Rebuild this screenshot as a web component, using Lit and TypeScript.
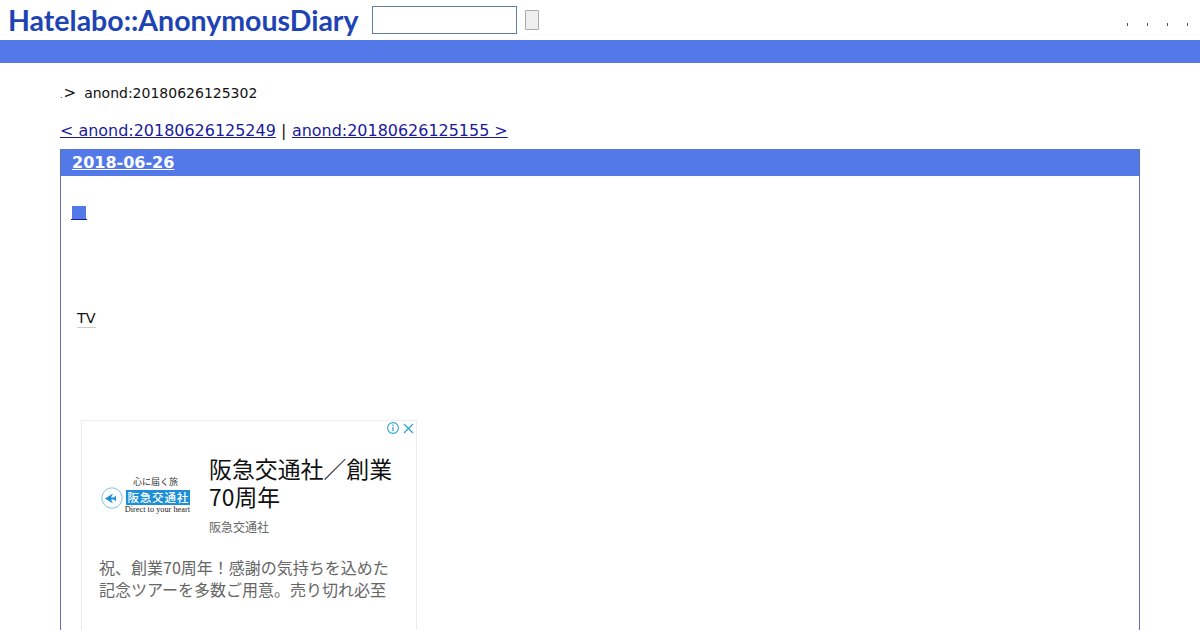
import { LitElement, css, html } from "lit";
import { customElement } from "lit/decorators.js";

@customElement("ad-card")
class AdCard extends LitElement {
  static styles = css`
    :host {
      display: block;
      position: relative;
      box-sizing: border-box;
      width: 336px;
      height: 280px;
      border: 1px solid #ececec;
      font-family: "Noto Sans CJK JP", "Liberation Sans", sans-serif;
    }
    .choices {
      position: absolute;
      top: 0;
      right: 1px;
      display: flex;
      align-items: center;
      gap: 2px;
    }
    .main {
      display: flex;
      align-items: flex-start;
      gap: 19px;
      padding: 33px 0 0 18px;
    }
    .logo {
      width: 90px;
      display: flex;
      flex-direction: column;
      align-items: flex-end;
      flex: none;
      margin-top: 23px;
    }
    .tag {
      font-size: 9px;
      line-height: 10px;
      color: #333;
      padding-right: 12px;
    }
    .mid {
      display: flex;
      align-items: center;
      gap: 3px;
      margin-top: 3px;
    }
    .mid svg {
      margin: -4px 0;
    }
    .brand {
      background: #1c8fd6;
      color: #fff;
      font-size: 11.5px;
      line-height: 15px;
      font-weight: 500;
      letter-spacing: 0.8px;
      padding: 0 1px 0 2px;
      white-space: nowrap;
    }
    .sub {
      font-family: "Liberation Serif", serif;
      font-size: 8.3px;
      line-height: 9px;
      color: #222;
      white-space: nowrap;
    }
    h2 {
      margin: 0;
      font-size: 22.9px;
      line-height: 28px;
      font-weight: 400;
      color: #111;
      width: 190px;
    }
    .who {
      font-size: 12px;
      line-height: 16px;
      color: #666;
      margin-top: 9px;
    }
    p {
      margin: 21px 0 0 17px;
      width: 295px;
      font-size: 16px;
      line-height: 22px;
      color: #666;
    }
  `;
  render() {
    return html`
      <div class="choices">
        <svg width="14" height="14" viewBox="0 0 14 14" fill="none" stroke="#2ba6cb">
          <circle cx="7" cy="7" r="5.4" stroke-width="1.1" />
          <path d="M7 6v4.2M7 3.6v1.4" stroke-width="1.3" />
        </svg>
        <svg width="13" height="13" viewBox="0 0 13 13" fill="none" stroke="#2ba6cb" stroke-width="1.2">
          <path d="M2 2l9 9M11 2l-9 9" />
        </svg>
      </div>
      <div class="main">
        <div class="logo">
          <div class="tag">心に届く旅</div>
          <div class="mid">
            <svg width="22" height="22" viewBox="0 0 22 22" fill="none" stroke="#4aa9de">
              <circle cx="11" cy="11" r="10.2" stroke-width="0.7" />
              <path d="M4 11.5l8-5-2 4h3l2-2v6l-2-2h-3l2 4z" fill="#1c8fd6" stroke="none" />
            </svg>
            <div class="brand">阪急交通社</div>
          </div>
          <div class="sub">Direct to your heart</div>
        </div>
        <div>
          <h2>阪急交通社／創業70周年</h2>
          <div class="who">阪急交通社</div>
        </div>
      </div>
      <p>祝、創業70周年！感謝の気持ちを込めた記念ツアーを多数ご用意。売り切れ必至</p>
    `;
  }
}

@customElement("app-root")
export class AppRoot extends LitElement {
  static styles = css`
    :host {
      display: block;
      height: 630px;
      overflow: hidden;
      font-family: "DejaVu Sans", sans-serif;
      color: #111;
    }
    header {
      display: flex;
      align-items: center;
      height: 40px;
      padding-left: 8px;
    }
    .logo {
      font-family: Lato, "Liberation Sans", sans-serif;
      font-weight: 700;
      font-size: 28.5px;
      line-height: 40px;
      color: #1e44b4;
      width: 364px;
      white-space: nowrap;
    }
    .search {
      box-sizing: border-box;
      width: 145px;
      height: 28px;
      border: 1px solid #5f7fa8;
      margin-right: 8px;
    }
    .go {
      box-sizing: border-box;
      width: 14px;
      height: 20px;
      background: #efefef;
      border: 1px solid #aaa;
      border-radius: 1px;
    }
    .dots {
      display: flex;
      gap: 19px;
      margin-left: auto;
      padding-right: 12px;
    }
    .dots i {
      width: 1px;
      height: 3px;
      margin-top: 8px;
      background: #555;
    }
    .bar {
      height: 23px;
      background: #5279e7;
    }
    main {
      padding: 21px 60px 0;
    }
    .crumb {
      display: flex;
      align-items: baseline;
      font-size: 14px;
      line-height: 18px;
      height: 18px;
      white-space: nowrap;
    }
    .crumb .gt {
      font-size: 15px;
      margin-right: 8px;
    }
    .crumb .dot {
      font-size: 8px;
      margin-right: 1px;
    }
    .pager {
      font-size: 15.96px;
      line-height: 19px;
      margin-top: 19px;
      height: 19px;
      white-space: nowrap;
    }
    .pager .sep {
      margin-right: 0.6px;
    }
    a {
      color: #1a1a9c;
    }
    .day {
      box-sizing: border-box;
      margin-top: 9px;
      border: 1px solid #5f73a8;
      border-top: 0;
      height: 600px;
    }
    h1 {
      margin: 0;
      height: 27px;
      background: #5279e7;
      padding: 1px 0 0 11px;
      box-sizing: border-box;
      font-size: 16px;
      line-height: 26px;
      font-weight: 700;
    }
    h1 a {
      color: #fff;
    }
    .mark {
      display: block;
      width: 16px;
      padding-top: 30px;
      margin-left: 10px;
    }
    .mark span {
      display: block;
      box-sizing: border-box;
      width: 16px;
      height: 14px;
      padding: 0 1px;
      border-bottom: 1px solid #1a1a9c;
    }
    .mark span::before {
      content: "";
      display: block;
      width: 14px;
      height: 13px;
      background: #5279e7;
    }
    .tv {
      display: inline-block;
      margin: 89px 0 0 16px;
      font-size: 14.4px;
      line-height: 18px;
      border-bottom: 1px solid #ccc;
    }
    ad-card {
      margin: 92px 0 0 20px;
    }
  `;
  render() {
    return html`
      <header>
        <div class="logo">Hatelabo::AnonymousDiary</div>
        <div class="search"></div>
        <div class="go"></div>
        <div class="dots"><i></i><i></i><i></i><i></i></div>
      </header>
      <div class="bar"></div>
      <main>
        <div class="crumb">
          <span class="dot">.</span><span class="gt">&gt;</span>
          <span>anond:20180626125302</span>
        </div>
        <div class="pager">
          <a href="#">&lt; anond:20180626125249</a> <span class="sep">|</span>
          <a href="#">anond:20180626125155 &gt;</a>
        </div>
        <section class="day">
          <h1><a href="#">2018-06-26</a></h1>
          <a class="mark" href="#"><span></span></a>
          <div class="tv">TV</div>
          <ad-card></ad-card>
        </section>
      </main>
    `;
  }
}
